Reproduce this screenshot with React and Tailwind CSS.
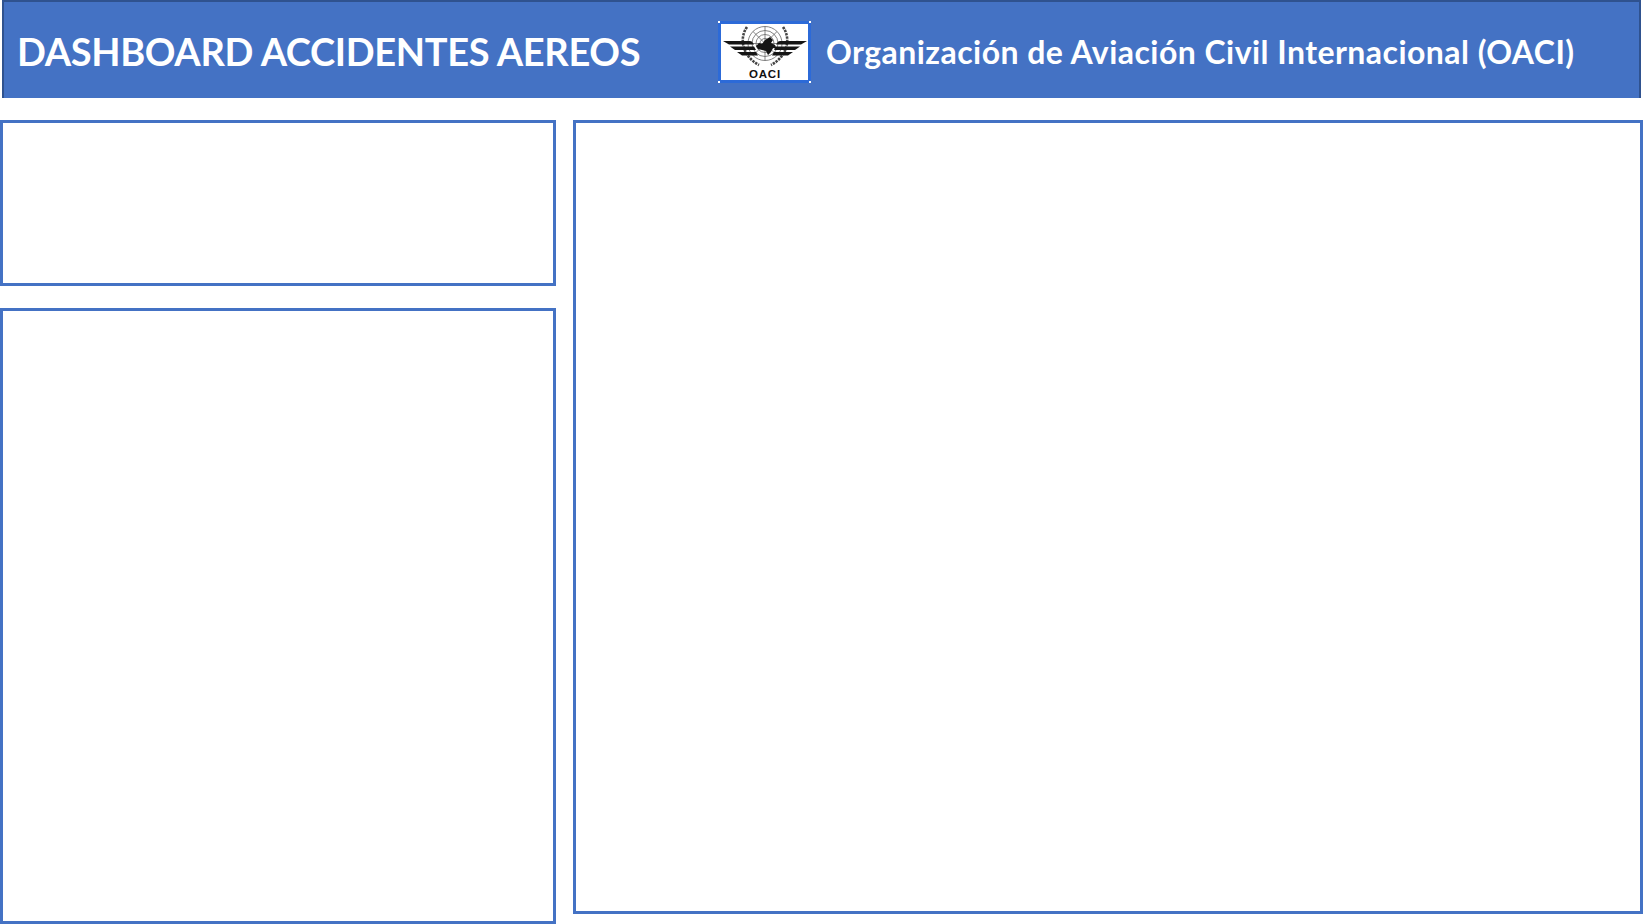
function Logo() {
  return (
    <div className="relative w-[93px] h-[62px] bg-white border-[3px] border-[#2c6ad8] shrink-0">
      <span className="absolute -top-[3px] -left-[3px] w-[2px] h-[2px] bg-white" />
      <span className="absolute -top-[3px] -right-[3px] w-[2px] h-[2px] bg-white" />
      <span className="absolute -bottom-[3px] -left-[3px] w-[2px] h-[2px] bg-white" />
      <span className="absolute -bottom-[3px] -right-[3px] w-[2px] h-[2px] bg-white" />
      <svg viewBox="0 0 87 56" className="block w-full h-full">
        <g fill="none" stroke="#666" strokeWidth="0.8">
          <circle cx="44" cy="19.5" r="17" />
          <circle cx="44" cy="19.5" r="13" />
          <circle cx="44" cy="19.5" r="9" />
          <circle cx="44" cy="19.5" r="5" />
          <path d="M44 2.5V36.5M27 19.5H61M32 7.5L56 31.5M56 7.5L32 31.5" />
        </g>
        <g fill="none" stroke="#444" strokeWidth="2.6" strokeDasharray="2.4 1">
          <path d="M26 3C18 14 21 32 38 41" />
          <path d="M62 3C70 14 67 32 50 41" />
        </g>
        <g fill="#151515">
          <path d="M2 17H29Q31 17 32 19L33 20.5H8Z" />
          <path d="M9 22.5H33L35 26H14Z" />
          <path d="M16 28H35L37 31.5H21Z" />
          <path d="M86 17H59Q57 17 56 19L55 20.5H80Z" />
          <path d="M79 22.5H55L53 26H74Z" />
          <path d="M72 28H53L51 31.5H67Z" />
          <path d="M35 22L38 19L41 20L44 16L49 13L52 16L50 19L54 21L56 25L52 24L50 28L47 31L45 27L41 26L37 25Z" />
        </g>
        <text x="44" y="54" textAnchor="middle" fontFamily="'Liberation Sans', sans-serif" fontWeight="700" fontSize="11.5" letterSpacing="0.8" fill="#111">OACI</text>
      </svg>
    </div>
  );
}

function Panel({ className }) {
  return <div className={"border-[3px] border-[#4472c4] bg-white " + className} />;
}

export default function App() {
  return (
    <div className="w-[1643px] h-[924px] bg-white overflow-hidden flex flex-col font-['Lato',sans-serif]">
      <div className="ml-[2px] mr-[2px] h-[98px] shrink-0 bg-[#4472c4] border-t-2 border-x-2 border-[#2f528f] flex items-center pt-[3px] text-white font-bold">
        <div className="w-[714px] pl-[13px] pb-[2px] text-[38px] leading-none tracking-[-0.35px] whitespace-nowrap">DASHBOARD ACCIDENTES AEREOS</div>
        <Logo />
        <div className="ml-[15px] text-[32px] leading-none tracking-[0.45px] whitespace-nowrap">Organización de Aviación Civil Internacional (OACI)</div>
      </div>
      <div className="mt-[22px] flex gap-[17px] flex-1 min-h-0">
        <div className="w-[556px] flex flex-col gap-[22px]">
          <Panel className="h-[166px] shrink-0" />
          <Panel className="flex-1" />
        </div>
        <Panel className="flex-1 h-[794px]" />
      </div>
    </div>
  );
}
